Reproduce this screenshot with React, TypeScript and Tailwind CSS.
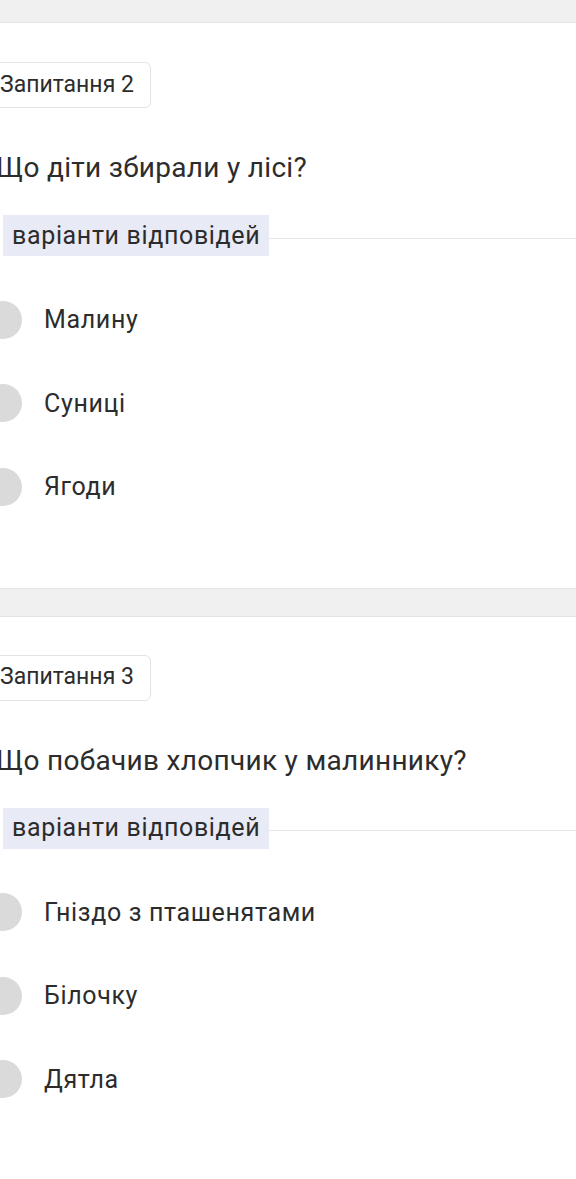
type Question = {
    label: string;
    text: string;
    options: string[];
};

const questions: Question[] = [
    {
        label: "Запитання 2",
        text: "Що діти збирали у лісі?",
        options: ["Малину", "Суниці", "Ягоди"],
    },
    {
        label: "Запитання 3",
        text: "Що побачив хлопчик у малиннику?",
        options: ["Гніздо з пташенятами", "Білочку", "Дятла"],
    },
];

function QuestionCard({ q, last }: { q: Question; last?: boolean }) {
    return (
        <div
            className={
                last
                    ? "bg-white border-t border-[#e4e4e4] pt-[38px] flex-1"
                    : "bg-white border-y border-[#e4e4e4] pt-[39px] pb-[59px]"
            }
        >
            {/* Badge */}
            <div className="flex">
                <div className="ml-[-17px] h-[46px] px-[16px] flex items-center border border-[#e3e3e3] rounded-[6px] text-[23px] text-[#2c2c2c]">
                    {q.label}
                </div>
            </div>

            {/* Question */}
            <h2 className="ml-[-4px] mt-[42px] h-[36px] leading-[36px] text-[28px] tracking-[0.3px] text-[#2c2c2c] whitespace-nowrap">
                {q.text}
            </h2>

            {/* Divider with label */}
            <div className="mt-[29px] flex items-center">
                <div className="ml-[3px] h-[41px] px-[9px] flex items-center bg-[#e8eaf5] text-[25px] tracking-[0.65px] text-[#2c2c2c]">
                    варіанти відповідей
                </div>
                <div className="flex-1 h-px mt-[5px] bg-[#e8e8e8]" />
            </div>

            {/* Options */}
            <div className="mt-[22px] flex flex-col">
                {q.options.map((o) => (
                    <div key={o} className="h-[83.5px] flex items-center">
                        <div className="ml-[-16px] w-[38px] h-[38px] rounded-full bg-[#dadada] shrink-0" />
                        <span className="ml-[22px] text-[25px] tracking-[0.65px] text-[#2c2c2c]">{o}</span>
                    </div>
                ))}
            </div>
        </div>
    );
}

export default function App() {
    return (
        <div
            className="w-[576px] h-[1179px] overflow-hidden bg-[#f0f0f0] flex flex-col"
            style={{ fontFamily: "Roboto, 'Noto Sans', sans-serif" }}
        >
            <div className="h-[22px] shrink-0" />
            <QuestionCard q={questions[0]} />
            <div className="h-[27px] shrink-0" />
            <QuestionCard q={questions[1]} last />
        </div>
    );
}
